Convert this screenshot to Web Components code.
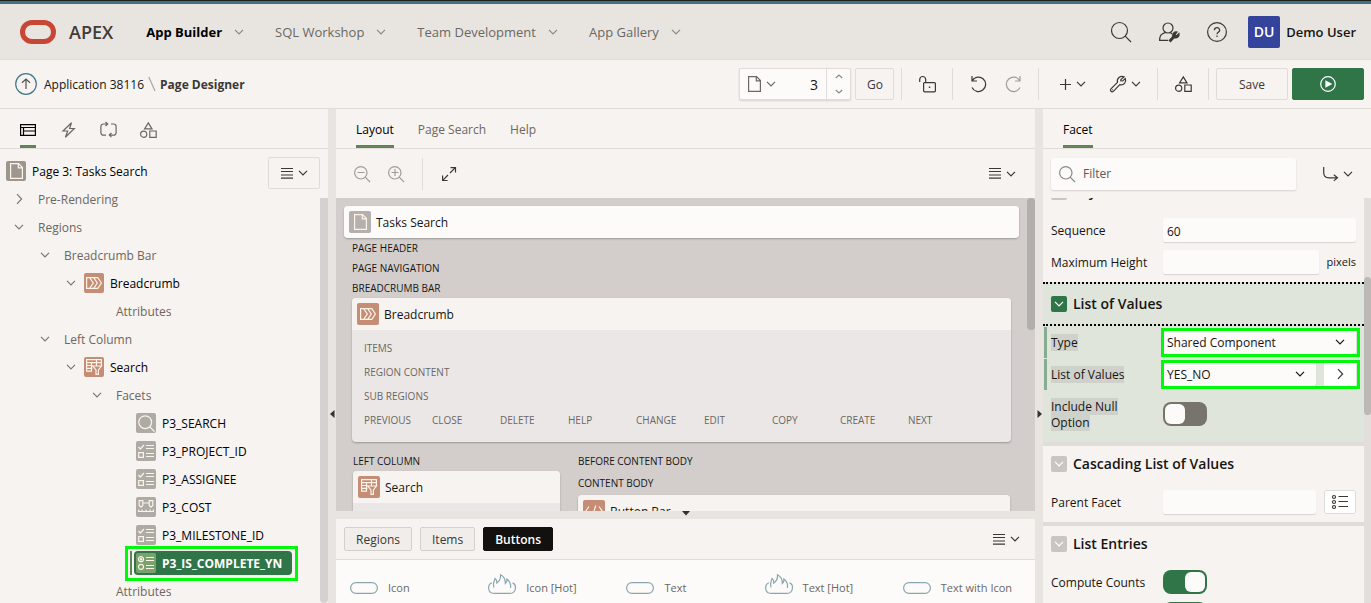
<!DOCTYPE html>
<html lang="en">
<head>
<meta charset="utf-8">
<meta name="viewport" content="width=device-width, initial-scale=1">
<title>Page Designer</title>
<style>
  body {
    margin: 0;
    font: 12px/16px "Open Sans", "Noto Sans", sans-serif;
    color: #161513;
    background: #f7f3f0;
    --panel: #f7f3f0;
    --chrome: #e8e5e1;
    --line: #e0dcd8;
    --canvas: #d3cecb;
    --field: #fcfbfa;
    --muted: #6b6762;
    --green: #2f7548;
    --accent: #5f8557;
    --clay: #c58d75;
    --mark: #00f80a;
  }
</style>
</head>
<body>
<page-designer></page-designer>

<script>
const ICONS = {
  down: [10, 6, '<path d="M1 .8l4 4 4-4"/>'],
  up: [8, 5, '<path d="M.8 4L4 1l3.200 3"/>'],
  downsm: [8, 5, '<path d="M.8 1L4 4l3.200-3"/>'],
  right: [7, 12, '<path d="M1 1.200L5.600 6 1 10.800"/>'],
  lines: [12, 11, '<path d="M0 .5h12M0 3.500h12M0 7h12M0 10.200h12"/>'],
  search: [20, 20, '<circle cx="8.500" cy="8.500" r="8"/><path d="M14.200 14.200L20 20"/>'],
  filter: [16, 16, '<circle cx="6.800" cy="6.800" r="6.200"/><path d="M11.200 11.200L16 16"/>'],
  zoomout: [16, 16, '<circle cx="6.800" cy="6.800" r="6.200"/><path d="M11.200 11.200L16 16M3.500 6.500h7"/>'],
  zoomin: [16, 16, '<circle cx="6.800" cy="6.800" r="6.200"/><path d="M11.200 11.200L16 16M3.500 6.500h7M7 3v7"/>'],
  admin: [20, 20, '<circle cx="9" cy="6" r="5"/><path d="M6.500 10.400C2 12 .6 13.500.6 18.400H9M11.300 10.500l2 1.500M.6 16.500v1.900"/><path d="M10.500 19.500L15 14.500" stroke-width="3"/><path d="M14 15c-1-3 1-5.500 4-5l-2 2.600 1.400 1.300L20 11.500c.6 3-2 5-4.500 4.300z" fill="currentColor"/>'],
  help: [20, 20, '<circle cx="10" cy="10" r="9.400"/><path d="M7.400 8.200a2.600 2.500 0 1 1 3.900 2.100c-.9.500-1.300.9-1.300 2"/><path d="M10 13.600v1.500"/>'],
  upcircle: [22, 22, '<circle cx="11" cy="11" r="10.300" stroke="#41788a"/><path d="M11 16V6M7 9.800L11 6l4 3.800"/>'],
  slash: [8, 16, '<path d="M.8 1L7 15"/>'],
  file: [13, 16, '<path d="M.6.600h8l3.800 4v10.800H.6zM8.300.800v4.100h4"/>'],
  unlock: [17, 17, '<rect x="4.600" y="6.600" width="11.800" height="9.200" rx="1"/><path d="M.7 6V3.500a3 3 0 0 1 6 0v3M10.500 10.500v1.500M9.800 11.200h1.500"/>'],
  undo: [16, 16, '<path d="M1 0v5h5M1.300 4.600A7.200 7.200 0 1 1 1 11.500"/>'],
  redo: [16, 16, '<path d="M15 0v5h-5M14.700 4.600A7.200 7.200 0 1 0 15 11.500"/>'],
  plus: [11, 11, '<path d="M5.500 0v11M0 5.500h11"/>'],
  wrench: [16, 16, '<path d="M14 .9a4.600 4.600 0 0 0-6.500 5.400L.9 12.900a1.700 1.700 0 0 0 2.400 2.400L9.800 8.700A4.600 4.600 0 0 0 15.300 2.500L12.700 5 10.700 4.800 10.900 3.600zM2 13.700h.6"/>'],
  shapes: [16, 16, '<path d="M8.300.900l3.700 6H4.600zM9.800 9h6.400v6.400H9.800z"/><circle cx="3.700" cy="12.200" r="3.100"/>'],
  play: [16, 16, '<circle cx="8" cy="8" r="7.300"/><path d="M5.400 4.200L12.300 8l-6.900 3.800z" fill="currentColor" stroke="none"/>'],
  layout: [16, 12, '<path d="M.6.600h14.800v10.800H.6zM.6 3.500h14.800M3.500 3.500v8M3.500 7h12"/>'],
  bolt: [13, 16, '<path d="M9.500.800L1 9h4.700L3.400 15.300 12.300 6.500H7.600z"/>'],
  cycle: [16, 15, '<path d="M6 13.200H3.400a2.500 2.500 0 0 1-2.500-2.500V4.500A2.500 2.500 0 0 1 3.400 2h4M5.500 0l2.200 2-2.200 2M11 2h2.600a2.500 2.500 0 0 1 2.500 2.500v6.200a2.500 2.500 0 0 1-2.500 2.500h-4M11.500 11l-2.200 2.100 2.200 2"/>'],
  expand: [14, 14, '<path d="M8.500.600h5v5M13.300.700L8 6M.6 8.500v5h5M.8 13.300L6 8"/>'],
  goto: [15, 14, '<path d="M.7 0v5.500q0 5.300 5.300 5.300h8M10.800 7.700l3.700 3.100-3.700 3.100"/>'],
  crumbs: [16, 12, '<path d="M.6.600h11.200L15.400 6l-3.600 5.400H.6zM3.800.800L7.300 6l-3.500 5.200M7.800.800L11.300 6l-3.500 5.200"/>'],
  facet: [16, 16, '<path d="M15.400 6.500V.7H.6v11.400h5.500M.6 3.700h14.800M.6 6.500h5.800M.6 9.300h5.800M5.500 3.700v8.400M10.500 1v5.500M6.800 7h8.600l-3 4v4.300h-2.400V11z"/>'],
  checks: [16, 14, '<path d="M.5 3l1.800 2L6 1M.7 8.600h4.700v4.700H.7zM8 1.500h8M8 4.500h8M8 9.500h8M8 12.500h8"/>'],
  radios: [16, 14, '<circle cx="3" cy="3.200" r="2.500"/><circle cx="3" cy="3.200" r=".7"/><circle cx="3" cy="10.800" r="2.500"/><path d="M8 1.500h8M8 4.500h8M8 9.500h8M8 12.500h8"/>'],
  range: [16, 14, '<path d="M1.200.600h3.600v4.800L3 7.200 1.200 5.400zM11.200.600h3.600v4.800L13 7.200l-1.800-1.800zM4.800 3h6.400M0 11.500h16M.6 9.500v2M4 9.500v2M8 9.500v2M12 9.500v2M15.400 9.500v2"/>'],
  lens: [17, 17, '<circle cx="7.200" cy="7.200" r="6.400"/><path d="M11.800 11.800l4.700 4.700"/>'],
  code: [18, 12, '<path d="M4 1.500L.8 6 4 10.500M14 1.500L17.200 6 14 10.500M10.800.500L7.200 11.500"/>'],
  listing: [16, 14, '<circle cx="2" cy="2" r="1.500"/><circle cx="2" cy="7" r="1.500"/><circle cx="2" cy="12" r="1.500"/><path d="M6.500 1.500H16M6.500 6.500H16M6.500 11.500H16"/>'],
  pill: [28, 12, '<rect x=".6" y=".6" width="26.800" height="10.800" rx="5.400"/>'],
  hot: [28, 20, '<path d="M4 8.800C-1 10.500-.5 19.400 6 19.400h16c6.500 0 7-8.900 2.500-10.500M6 13.500C4.500 9.500 6.500 7 7 4.500c1.500 1 2 2.600 1.800 4.500 3-2 4-4.500 3.700-8.300 3.500 1.800 5 5 4.800 8.800 1-.8 1.800-2.500 1.600-4.500 2.600 2 4.300 5 3.600 9"/>'],
  triL: [5, 8, '<path d="M4.500 0v8L0 4z" fill="currentColor" stroke="none"/>'],
  triR: [5, 8, '<path d="M.5 0v8L5 4z" fill="currentColor" stroke="none"/>'],
  triD: [8, 5, '<path d="M0 0h8L4 4.500z" fill="currentColor" stroke="none"/>']
};

/* Attaches an open shadow root holding the element's styles and markup. */
const RESET = `
  :host, *, *::before, *::after { box-sizing: border-box; }
  button, input, select { font: inherit; color: inherit; margin: 0; border: 0; border-radius: 0; background: none; padding: 0; outline: 0; }
  a { color: inherit; text-decoration: none; }
  .text { padding-top: 2px; }
`;
function define(name, render) {
  customElements.define(name, class extends HTMLElement {
    connectedCallback() {
      if (this.shadowRoot) return;
      const root = this.attachShadow({ mode: 'open' });
      const tpl = document.createElement('template');
      const { css, html, ready } = render(this);
      tpl.innerHTML = `<style>${RESET}${css}</style>${html}`;
      root.append(tpl.content.cloneNode(true));
      if (ready) ready(root);
    }
  });
}
const icon = name => `<ui-icon name="${name}"></ui-icon>`;

define('ui-icon', el => {
  const [w, h, body] = ICONS[el.getAttribute('name')];
  return {
    css: `:host { display: inline-block; flex: none; width: ${w}px; height: ${h}px; }
      svg { display: block; overflow: visible; }`,
    html: `<svg width="${w}" height="${h}" viewBox="0 0 ${w} ${h}" fill="none" stroke="currentColor" stroke-width="1.2" aria-hidden="true">${body}</svg>`
  };
});

define('icon-tile', el => ({
  css: `:host { display: grid; place-items: center; flex: none; width: 20px; height: 20px; border-radius: 2px; color: #fdf3e7; background: var(--tile, #aeaaa6); }
    :host([large]) { width: 22px; height: 22px; }`,
  html: icon(el.getAttribute('name'))
}));

define('icon-button', el => ({
  css: `:host { display: block; height: 32px; min-width: 34px; color: #3b3835; }
    :host([faded]) { color: #a19d99; }
    :host([framed]) button { border: 1px solid var(--line); border-radius: 2px; }
    button { display: flex; align-items: center; justify-content: center; gap: 5px; width: 100%; height: 100%; }`,
  html: `<button type="button" aria-label="${el.getAttribute('label')}">${el.getAttribute('icons').split(' ').map(icon).join('')}</button>`
}));

define('v-rule', () => ({
  css: `:host { display: block; flex: none; width: 1px; height: 32px; background: var(--line); }`, html: ''
}));

define('text-button', () => ({
  css: `:host { display: block; height: 32px; color: #3b3835; }
    button { width: 100%; height: 100%; padding: 2px 11px 0; border: 1px solid var(--line); border-radius: 2px; }
    :host([compact]) { height: 24px; }
    :host([compact]) button { background: #f1edeb; border-color: #d3cfcb; }
    :host([pressed]) button { background: #12110f; border-color: #12110f; color: #fff; font-weight: 600; }
    :host([primary]) button { display: grid; place-items: center; padding: 0; background: var(--green); border-color: var(--green); color: #fff; }`,
  html: `<button type="button"><slot></slot></button>`
}));

define('app-header', () => ({
  css: `:host { display: flex; align-items: center; height: 60px; padding: 3px 15px 0 20px; border-top: 1px solid #221f1d; border-bottom: 1px solid var(--line); background: linear-gradient(#3f7282 3px, var(--chrome) 3px); font-size: 13px; }
    .logo { width: 36px; height: 24px; border: 5px solid #c74634; border-radius: 12px; }
    .brand { margin-left: 13px; font-size: 18px; line-height: 24px; font-weight: 600; color: #403c38; }
    nav { display: flex; gap: 31px; margin-left: 33px; }
    nav a { display: flex; align-items: center; gap: 12px; color: #6b6762; }
    nav a.current { color: #000; font-weight: 700; }
    nav ui-icon { color: #8b8783; }
    .tools { display: flex; align-items: center; gap: 14px; margin-left: auto; }
    .user { display: flex; align-items: center; gap: 6px; font-weight: 600; }
    .avatar { display: grid; place-items: center; width: 32px; height: 32px; border-radius: 2px; color: #fff; background: #34439c; font-size: 14px; }`,
  html: `<span class="logo"></span><span class="brand">APEX</span>
    <nav>
      <a class="current" href="#">App Builder ${icon('down')}</a>
      <a href="#">SQL Workshop ${icon('down')}</a>
      <a href="#">Team Development ${icon('down')}</a>
      <a href="#">App Gallery ${icon('down')}</a>
    </nav>
    <div class="tools">
      <icon-button icons="search" label="Search"></icon-button>
      <icon-button icons="admin" label="Administration"></icon-button>
      <icon-button icons="help" label="Help"></icon-button>
      <a class="user" href="#"><span class="avatar">DU</span>Demo User</a>
    </div>`
}));

define('designer-toolbar', () => ({
  css: `:host { display: flex; align-items: center; justify-content: space-between; height: 49px; padding: 0 7px 0 15px; border-bottom: 1px solid var(--line); background: var(--panel); }
    nav { display: flex; align-items: center; gap: 4px; }
    nav a { display: flex; align-items: center; gap: 7px; }
    nav strong { font-weight: 700; color: #3b3835; }
    nav ui-icon[name=upcircle] { color: #55514d; }
    nav ui-icon[name=slash] { color: #a9a5a1; }
    .tools, .group { display: flex; align-items: center; }
    .page { display: grid; grid-template-columns: 44px 42px 24px; height: 32px; border: 1px solid var(--line); border-radius: 2px; background: var(--field); box-shadow: 0 1px 2px #0002; }
    .page > button { display: flex; align-items: center; justify-content: center; gap: 5px; color: #6b6762; }
    .page input { width: 100%; padding: 2px 8px 0 0; text-align: right; font-size: 14px; appearance: textfield; }
    .page input::-webkit-inner-spin-button { display: none; }
    .spin { display: grid; border-left: 1px solid var(--line); color: #8b8783; }
    .spin button { display: grid; place-items: center; }
    .go { width: 39px; margin: 0 7px 0 4px; }
    .group { justify-content: center; width: 50px; height: 32px; }
    .pair { width: 85px; }
    .menus { width: 118px; gap: 18px; padding-left: 2px; }
    .save { width: 72px; margin: 0 4px 0 7px; }
    .run { width: 72px; }`,
  html: `<nav><a href="#">${icon('upcircle')}<span class="text">Application 38116</span></a>${icon('slash')}<strong class="text">Page Designer</strong></nav>
    <div class="tools">
      <div class="page">
        <button type="button" aria-label="Pages">${icon('file')}${icon('down')}</button>
        <input type="number" value="3" aria-label="Page number">
        <span class="spin"><button type="button" aria-label="Next page">${icon('up')}</button><button type="button" aria-label="Previous page">${icon('downsm')}</button></span>
      </div>
      <text-button class="go">Go</text-button>
      <v-rule></v-rule>
      <span class="group"><icon-button icons="unlock" label="Page unlocked"></icon-button></span>
      <v-rule></v-rule>
      <span class="group pair"><icon-button icons="undo" label="Undo"></icon-button><icon-button faded icons="redo" label="Redo"></icon-button></span>
      <v-rule></v-rule>
      <span class="group menus"><icon-button icons="plus down" label="Create"></icon-button><icon-button icons="wrench down" label="Utilities"></icon-button></span>
      <v-rule></v-rule>
      <span class="group"><icon-button icons="shapes" label="Shared Components"></icon-button></span>
      <v-rule></v-rule>
      <text-button class="save">Save</text-button>
      <text-button class="run" primary>${icon('play')}</text-button>
    </div>`
}));

define('tab-strip', () => ({
  css: `:host { display: flex; gap: 24px; flex: none; height: 40px; padding: 0 20px; border-bottom: 1px solid var(--line); background: var(--panel); color: var(--muted); }`,
  html: `<slot></slot>`
}));
define('tab-item', el => ({
  css: `:host { display: block; }
    button { display: flex; align-items: center; justify-content: center; min-width: 16px; height: 39px; padding-top: 5px; border-bottom: 3px solid transparent; }
    :host([selected]) button { color: #000; border-color: var(--accent); }`,
  html: `<button type="button" role="tab" aria-label="${el.getAttribute('label')}"><slot></slot></button>`
}));

define('pane-splitter', el => ({
  css: `:host { display: flex; justify-content: center; flex: none; background: var(--chrome); color: #33302d; }
    :host([side]) { padding-top: 301px; }
    :host([flat]) { height: 8px; }
    button { display: flex; align-self: flex-start; }`,
  html: `<button type="button" aria-label="Collapse">${icon(el.getAttribute('arrow'))}</button>`
}));

define('tree-node', el => {
  const glyph = el.getAttribute('icon');
  const state = el.getAttribute('state');
  return {
    css: `:host { display: flex; align-items: center; height: 28px; padding-left: calc(32px + 26px * var(--depth)); color: var(--muted); white-space: nowrap; }
      :host([icon]) { color: #000; }
      .twist { display: grid; place-items: center; flex: none; width: 26px; margin-left: -26px; color: #7b7773; }
      .item { display: flex; align-items: center; gap: 6px; height: 24px; margin-left: -2px; padding: 0 10px 0 2px; border-radius: 4px; }
      :host(:not([icon])) .item { padding-left: 8px; }
      :host([selected]) .item { position: relative; color: #fff; background: var(--green); font-weight: 700; --tile: #79a26d; }
      :host([selected]) .item::before { content: ""; position: absolute; inset: 0 100% 0 -4px; width: 2px; background: var(--accent); }
      :host([selected]) .item::after { content: ""; position: absolute; inset: -5px -6px -6px -9px; border: 3px solid var(--mark); }`,
    html: `<span class="twist">${state ? icon(state === 'open' ? 'down' : 'right') : ''}</span>
      <span class="item">${glyph ? `<icon-tile name="${glyph}"></icon-tile>` : ''}<span class="text"><slot></slot></span></span>`
  };
});

define('tree-pane', () => {
  const rows = [
    [-1, 'Page 3: Tasks Search', '', 'file', '#9c968f'],
    [0, 'Pre-Rendering', 'closed'],
    [0, 'Regions', 'open'],
    [1, 'Breadcrumb Bar', 'open'],
    [2, 'Breadcrumb', 'open', 'crumbs', 'var(--clay)'],
    [3, 'Attributes', ''],
    [1, 'Left Column', 'open'],
    [2, 'Search', 'open', 'facet', 'var(--clay)'],
    [3, 'Facets', 'open'],
    [4, 'P3_SEARCH', '', 'lens'],
    [4, 'P3_PROJECT_ID', '', 'checks'],
    [4, 'P3_ASSIGNEE', '', 'checks'],
    [4, 'P3_COST', '', 'range'],
    [4, 'P3_MILESTONE_ID', '', 'checks'],
    [4, 'P3_IS_COMPLETE_YN', '', 'radios', '', true],
    [3, 'Attributes', '']
  ];
  return {
    css: `:host { display: flex; flex-direction: column; min-height: 0; overflow: hidden; }
      .body { display: flex; flex: 1; min-height: 0; padding-top: 8px; }
      .tree { flex: 1; min-width: 0; }
      .side { display: flex; flex-direction: column; align-items: flex-end; gap: 9px; flex: none; width: 60px; }
      .side icon-button { width: 52px; margin-right: 8px; }
      .bar { flex: 1; width: 8px; border-radius: 0 0 4px 4px; background: #d5d1ce; }`,
    html: `<tab-strip>
        <tab-item selected label="Rendering">${icon('layout')}</tab-item>
        <tab-item label="Dynamic Actions">${icon('bolt')}</tab-item>
        <tab-item label="Processing">${icon('cycle')}</tab-item>
        <tab-item label="Shared Components">${icon('shapes')}</tab-item>
      </tab-strip>
      <div class="body"><div class="tree" role="tree">${rows.map(([d, text, state, glyph, tile, sel]) =>
        `<tree-node role="treeitem" ${state ? `state="${state}"` : ''} ${glyph ? `icon="${glyph}"` : ''} ${sel ? 'selected' : ''} style="--depth:${d};${tile ? `--tile:${tile}` : ''}">${text}</tree-node>`).join('')}</div>
      <div class="side"><icon-button framed icons="lines down" label="Tree menu"></icon-button><div class="bar"></div></div></div>`
  };
});

define('layout-region', el => ({
  css: `:host { display: block; border-radius: 4px; background: #ebe7e6; box-shadow: 0 1px 2px #0004; overflow: hidden; }
    header { display: flex; align-items: center; gap: 5px; height: 32px; padding: 0 5px; background: var(--head, var(--panel)); }
    icon-tile { --tile: var(--region-tile, var(--clay)); }`,
  html: `<header><icon-tile large name="${el.getAttribute('icon')}"></icon-tile><span class="text">${el.getAttribute('label')}</span></header><slot></slot>`
}));

define('layout-canvas', () => ({
  css: `:host { display: flex; flex: 1; min-height: 0; overflow: hidden; background: var(--canvas); }
    .stage { flex: 1; min-width: 0; padding: 8px 8px 0; }
    .page { --head: var(--field); --region-tile: #b3b0ae; }
    .slots { padding: 0 8px; }
    h4 { margin: 0; font-size: 10px; font-weight: 400; line-height: 20px; color: #161513; }
    .inner { padding: 6px 12px 10px; font-size: 10px; line-height: 24px; color: var(--muted); }
    .buttons { display: flex; }
    .buttons span { flex: none; width: 68px; }
    .columns { display: grid; grid-template-columns: 207fr 432fr; gap: 18px; padding: 9px 1px 0; }
    .fill { height: 60px; }
    h4.loose { line-height: 24px; }
    .bar { width: 8px; height: 132px; border-radius: 4px; background: #b2aeab; }`,
  html: `<div class="stage">
      <layout-region class="page" icon="file" label="Tasks Search"></layout-region>
      <div class="slots">
        <h4>PAGE HEADER</h4><h4>PAGE NAVIGATION</h4><h4>BREADCRUMB BAR</h4>
        <layout-region icon="crumbs" label="Breadcrumb"><div class="inner">
          <div>ITEMS</div><div>REGION CONTENT</div><div>SUB REGIONS</div>
          <div class="buttons">${['PREVIOUS', 'CLOSE', 'DELETE', 'HELP', 'CHANGE', 'EDIT', 'COPY', 'CREATE', 'NEXT'].map(t => `<span>${t}</span>`).join('')}</div>
        </div></layout-region>
        <div class="columns">
          <div><h4>LEFT COLUMN</h4><layout-region icon="facet" label="Search"><div class="fill"></div></layout-region></div>
          <div><h4>BEFORE CONTENT BODY</h4><h4 class="loose">CONTENT BODY</h4><layout-region icon="code" label="Button Bar"></layout-region></div>
        </div>
      </div>
    </div><div class="bar"></div>`
}));

define('gallery-pane', () => ({
  css: `:host { display: block; flex: none; background: var(--field); }
    .filters { display: flex; align-items: center; gap: 8px; height: 41px; padding: 0 8px; border-bottom: 1px solid var(--line); background: var(--panel); }
    .filters icon-button { margin-left: auto; min-width: 42px; }
    ul { display: grid; grid-template-columns: repeat(5, 1fr); margin: 0; padding: 8px 0 0 8px; list-style: none; color: var(--muted); font-size: 11px; }
    li { display: flex; align-items: center; gap: 10px; height: 35px; padding: 4px 0 0 6px; white-space: nowrap; }
    li ui-icon { color: #8aa6b0; }
    li ui-icon[name=hot] { margin-top: -8px; }`,
  html: `<div class="filters"><text-button compact>Regions</text-button><text-button compact>Items</text-button><text-button compact pressed>Buttons</text-button>
      <icon-button icons="lines down" label="Gallery menu"></icon-button></div>
    <ul>${[['pill', 'Icon'], ['hot', 'Icon [Hot]'], ['pill', 'Text'], ['hot', 'Text [Hot]'], ['pill', 'Text with Icon']].map(([i, t]) => `<li>${icon(i)}${t}</li>`).join('')}</ul>`
}));

define('layout-pane', () => ({
  css: `:host { display: flex; flex-direction: column; min-width: 0; min-height: 0; overflow: hidden; }
    .tools { display: flex; align-items: center; flex: none; height: 49px; padding: 0 16px 0 9px; }
    .tools v-rule { margin: 0 9px 0 9px; }
    .tools .menu { margin-left: auto; }`,
  html: `<tab-strip><tab-item selected label="Layout">Layout</tab-item><tab-item label="Page Search">Page Search</tab-item><tab-item label="Help">Help</tab-item></tab-strip>
    <div class="tools">
      <icon-button faded icons="zoomout" label="Zoom out"></icon-button>
      <icon-button faded icons="zoomin" label="Zoom in"></icon-button>
      <v-rule></v-rule>
      <icon-button icons="expand" label="Expand"></icon-button>
      <icon-button class="menu" icons="lines down" label="Layout menu"></icon-button>
    </div>
    <layout-canvas></layout-canvas>
    <pane-splitter flat arrow="triD"></pane-splitter>
    <gallery-pane></gallery-pane>`
}));

define('property-group', el => ({
  css: `:host { display: block; padding-bottom: 4px; background: var(--panel); }
    h3 { display: flex; align-items: center; gap: 6px; height: 44px; margin: 0; padding: 0 8px; border-top: 4px solid var(--line); border-bottom: 4px solid transparent; font-size: 14px; font-weight: 600; }
    h3 button { display: grid; place-items: center; width: 16px; height: 16px; border-radius: 2px; color: #fff; background: #c9c5c1; }
    :host([active]) { background: #dfe5da; }
    :host([active]) h3 { border-top: 2px dotted #000; border-bottom: 2px dotted #000; }
    :host([active]) h3 button { background: var(--green); }`,
  html: `<h3><button type="button" aria-label="Toggle ${el.getAttribute('label')}">${icon('down')}</button>${el.getAttribute('label')}</h3><slot></slot>`
}));

define('property-row', el => {
  const kind = el.getAttribute('kind');
  const value = el.getAttribute('value') || '';
  const field = kind === 'switch'
    ? `<input id="f" type="checkbox" role="switch" ${value ? 'checked' : ''}>`
    : kind === 'select'
      ? `<span class="pick"><select id="f"><option>${value}</option></select>${icon('down')}</span>`
      : `<input id="f" type="text" value="${value}">`;
  return {
    css: `:host { display: grid; grid-template-columns: 112px 1fr; align-items: center; min-height: 32px; padding: 0 8px; }
      :host([tall]) { min-height: 48px; }
      label { padding: 2px 8px 0 0; }
      :host([lit]) label span { background: #ced2cb; }
      :host([changed]) { background: linear-gradient(#86ac92, #86ac92) 1px 1px / 3px 31px no-repeat; }
      .field { display: flex; align-items: center; gap: 8px; position: relative; min-width: 0; }
      :host([marked]) .field::after { content: ""; position: absolute; inset: -2px -4px -3px -2px; border: 3px solid var(--mark); pointer-events: none; }
      input[type=text], select { width: 100%; min-width: 0; height: 24px; padding: 2px 4px 0; border-radius: 2px; background: var(--field); box-shadow: 0 1px 1px #0002; }
      input[type=text] { flex: 1; }
      .pick { display: grid; flex: 1; align-items: center; }
      .pick > * { grid-area: 1 / 1; }
      .pick ui-icon { justify-self: end; margin-right: 11px; pointer-events: none; }
      select { appearance: none; }
      input[type=checkbox] { appearance: none; width: 44px; height: 24px; padding: 2px; border-radius: 8px; background: #76746b; }
      input[type=checkbox]::before { content: ""; display: block; width: 20px; height: 20px; border-radius: 6px; background: var(--field); }
      input[type=checkbox]:checked { background: var(--green); }
      input[type=checkbox]:checked::before { margin-left: 20px; }
      ::slotted(icon-button) { width: 32px; min-width: 32px; height: 24px; background: #fff; }`,
    html: `<label for="f"><span>${el.getAttribute('label')}</span></label><span class="field">${field}<slot></slot></span>`
  };
});

define('property-pane', () => ({
  css: `:host { display: flex; flex-direction: column; min-width: 0; min-height: 0; overflow: hidden; }
    .tools { display: flex; align-items: center; flex: none; height: 49px; padding: 0 16px 0 8px; }
    .filter { display: flex; align-items: center; gap: 8px; flex: 1; height: 32px; padding: 0 8px; border-radius: 2px; background: var(--field); box-shadow: 0 1px 2px #0002; color: #8b8783; }
    .filter input { flex: 1; min-width: 0; }
    .filter input::placeholder { color: #5b5753; opacity: 1; }
    .tools icon-button { margin-left: 25px; }
    .body { display: flex; flex: 1; min-height: 0; }
    .list { flex: 1; min-width: 0; overflow: hidden; }
    .bar { flex: none; width: 7px; padding-top: 79px; background: #e2dedb; }
    .bar::before { content: ""; display: block; height: 138px; border-radius: 4px; background: #bcb8b5; }
    small { font-size: 11px; }`,
  html: `<tab-strip><tab-item selected label="Facet">Facet</tab-item></tab-strip>
    <div class="tools"><label class="filter">${icon('filter')}<input type="text" placeholder="Filter" aria-label="Filter"></label>
      <icon-button icons="goto down" label="Go to group"></icon-button></div>
    <div class="body"><div class="list">
      <property-group label="Layout">
        <property-row label="Sequence" value="60"></property-row>
        <property-row label="Maximum Height"><small>pixels</small></property-row>
      </property-group>
      <property-group active label="List of Values">
        <property-row changed lit marked kind="select" label="Type" value="Shared Component"></property-row>
        <property-row changed lit marked kind="select" label="List of Values" value="YES_NO"><icon-button icons="right" label="Edit component"></icon-button></property-row>
        <property-row lit tall kind="switch" label="Include Null Option"></property-row>
      </property-group>
      <property-group label="Cascading List of Values">
        <property-row label="Parent Facet"><icon-button framed icons="listing" label="Choose parent facet"></icon-button></property-row>
      </property-group>
      <property-group label="List Entries">
        <property-row kind="switch" label="Compute Counts" value="on"></property-row>
        <property-row kind="switch" label="Show Counts" value="on"></property-row>
      </property-group>
    </div><div class="bar"></div></div>`,
  ready(root) {
    const list = root.querySelector('.list');
    requestAnimationFrame(() => { list.scrollTop = 28; });
  }
}));

define('page-designer', () => ({
  css: `:host { display: grid; grid-template-rows: auto auto 1fr; height: 100vh; overflow: hidden; }
    main { display: grid; grid-template-columns: 328px 8px 1fr 8px 328px; grid-template-rows: minmax(0, 1fr); min-height: 0; }`,
  html: `<app-header></app-header><designer-toolbar></designer-toolbar>
    <main><tree-pane></tree-pane><pane-splitter side arrow="triL"></pane-splitter><layout-pane></layout-pane><pane-splitter side arrow="triR"></pane-splitter><property-pane></property-pane></main>`
}));
</script>
</body>
</html>
